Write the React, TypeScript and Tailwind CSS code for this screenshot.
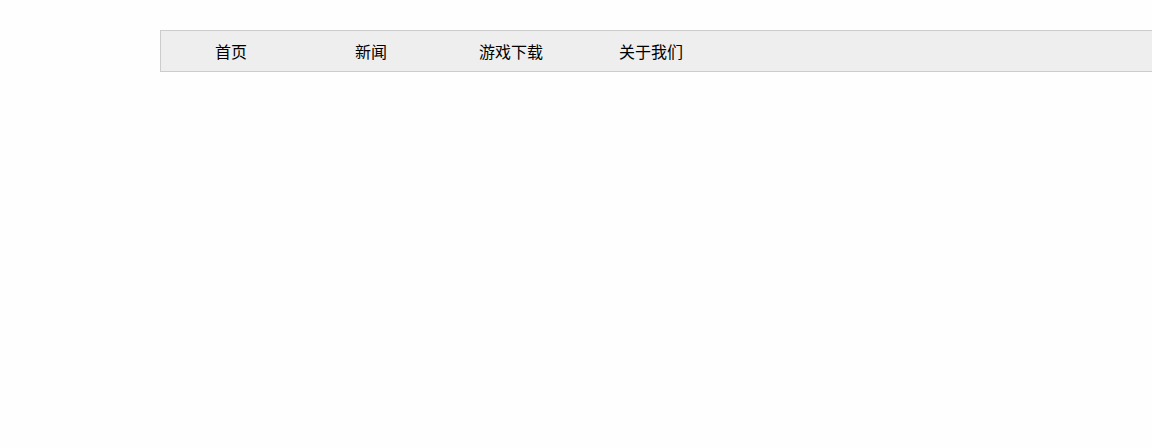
export default function App() {
  const items = ['首页', '新闻', '游戏下载', '关于我们']

  return (
    <div className="min-h-[448px] bg-[#fefefe] pt-[30px] overflow-hidden" style={{ fontFamily: '"Noto Sans CJK SC", sans-serif' }}>
      <ul className="ml-[160px] w-[1000px] h-[42px] flex border border-[#cccccc] bg-[#eeeeee]">
        {items.map((item) => (
          <li key={item} className="w-[140px] text-center leading-[40px] text-[16px] text-black">
            {item}
          </li>
        ))}
      </ul>
    </div>
  )
}
